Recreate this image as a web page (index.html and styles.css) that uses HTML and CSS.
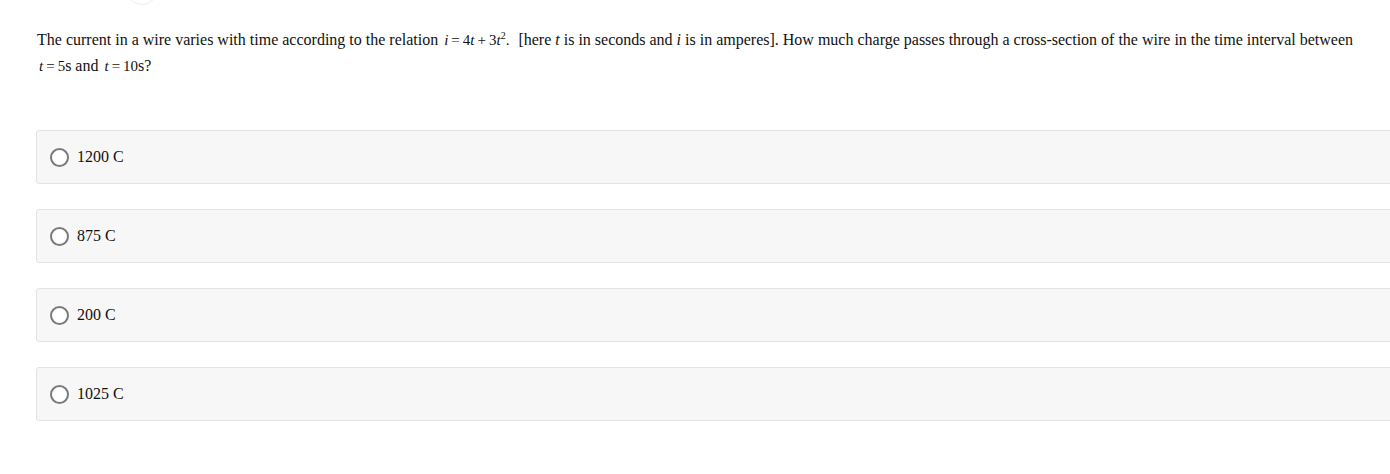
FILE: index.html
```html
<!DOCTYPE html>
<html>
<head>
<meta charset="utf-8">
<link rel="stylesheet" href="styles.css">
</head>
<body>
<div class="page">
  <div class="top-circle"></div>
  <div class="question">
    <p class="stem">The current in a wire varies with time according to the relation <span class="math eq"><i>i</i><span class="op">=</span>4<i>t</i><span class="op">+</span>3<i>t</i><sup>2</sup>.</span> [here <i>t</i> is in seconds and <i>i</i> is in amperes]. How much charge passes through a cross-section of the wire in the time interval between <span class="math"><i>t</i><span class="op">=</span>5</span>s and <span class="math"><i>t</i><span class="op">=</span>10</span>s?</p>
  </div>
  <div class="options">
    <label class="option"><span class="radio"></span><span class="label">1200 C</span></label>
    <label class="option"><span class="radio"></span><span class="label">875 C</span></label>
    <label class="option"><span class="radio"></span><span class="label">200 C</span></label>
    <label class="option"><span class="radio"></span><span class="label">1025 C</span></label>
  </div>
</div>
</body>
</html>
```

FILE: styles.css
```css
html, body {
  margin: 0;
  padding: 0;
  background: #ffffff;
}
body {
  font-family: "Liberation Serif", "Times New Roman", serif;
  color: #111;
  overflow: hidden;
}
.page {
  padding: 0 0 0 36px;
  width: 1390px;
  box-sizing: border-box;
}
.top-circle {
  width: 32px;
  height: 32px;
  margin: -27px 0 0 90px;
  border: 1px solid #ececec;
  border-radius: 50%;
  box-sizing: border-box;
}
.question {
  padding-top: 22px;
  width: 1340px;
}
.stem {
  margin: 0;
  padding: 0 0 0 1px;
  font-size: 16px;
  line-height: 26px;
}
.math {
  font-size: 15px;
  margin-left: 2px;
}
.math.eq {
  margin-right: 5px;
}
.op {
  padding: 0 3px;
}
.math sup {
  font-size: 10px;
  vertical-align: 6px;
  line-height: 0;
}
.options {
  margin-top: 51px;
  display: flex;
  flex-direction: column;
  gap: 25px;
  width: 1370px;
}
.option {
  display: flex;
  align-items: center;
  height: 54px;
  box-sizing: border-box;
  background: #f7f7f7;
  border: 1px solid #e3e3e3;
  border-radius: 3px;
  padding-left: 13px;
}
.radio {
  width: 19px;
  height: 19px;
  box-sizing: border-box;
  border: 2px solid #7a7a7a;
  border-radius: 50%;
  background: #fff;
  flex: none;
}
.label {
  margin-left: 8px;
  font-size: 16px;
  color: #111;
}
```
